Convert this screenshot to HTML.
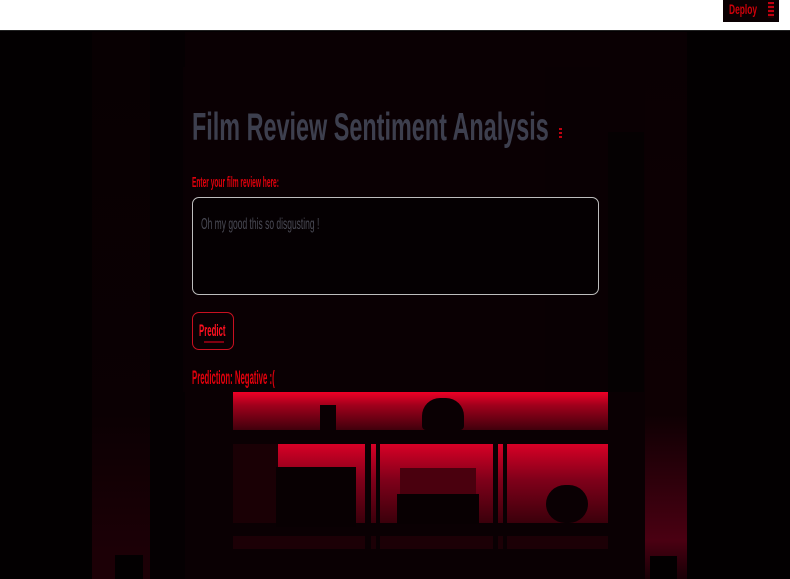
<!DOCTYPE html>
<html><head><meta charset="utf-8"><style>
*{margin:0;padding:0;box-sizing:border-box}
body{width:790px;height:579px;overflow:hidden;background:#030002;font-family:"Liberation Sans",sans-serif;position:relative}
.a{position:absolute}
.t{position:absolute;white-space:nowrap;transform-origin:0 0}
</style></head><body>
<div class="a" style="left:0;top:0;width:790px;height:31px;background:#fff;border-bottom:1px solid #222"></div>
<div class="a" style="left:723px;top:0;width:56px;height:22px;background:#0a0002"></div>
<div class="t" style="left:729px;top:1px;color:#d0000a;font-size:14px;font-weight:bold;transform:scaleX(.6)">Deploy</div>
<div class="a" style="left:768px;top:2px;width:6px;height:16px;background:repeating-linear-gradient(#c00010 0 2px,#200 2px 4px)"></div>

<div class="a" style="left:0;top:32px;width:790px;height:547px;background:#030001"></div>
<div class="a" style="left:92px;top:32px;width:58px;height:547px;background:linear-gradient(#080002 0%,#0b0003 70%,#1c0006 95%)"></div>
<div class="a" style="left:150px;top:32px;width:35px;height:547px;background:#050002"></div>
<div class="a" style="left:185px;top:32px;width:460px;height:547px;background:#0a0003"></div>
<div class="a" style="left:645px;top:32px;width:42px;height:547px;background:linear-gradient(#0a0003 0%,#0e0003 70%,#4a0012 93%,#180006)"></div>
<div class="a" style="left:688px;top:32px;width:102px;height:547px;background:#030001"></div>
<div class="a" style="left:545px;top:67px;width:55px;height:325px;background:#040001"></div>
<div class="a" style="left:608px;top:132px;width:36px;height:260px;background:#050102"></div>
<div class="a" style="left:115px;top:555px;width:28px;height:24px;background:#030001"></div>
<div class="a" style="left:650px;top:556px;width:27px;height:23px;background:#030001"></div>

<div class="a" style="left:233px;top:392px;width:375px;height:38px;background:linear-gradient(#f00026 0%,#a0001c 35%,#40000c 100%)"></div>
<div class="a" style="left:233px;top:430px;width:375px;height:14px;background:#0a0003"></div>
<div class="a" style="left:233px;top:444px;width:375px;height:79px;background:linear-gradient(#d80026 0%,#80001a 45%,#3a000b 100%)"></div>
<div class="a" style="left:233px;top:444px;width:45px;height:79px;background:#1a0005"></div>
<div class="a" style="left:233px;top:523px;width:375px;height:13px;background:#0a0003"></div>
<div class="a" style="left:233px;top:536px;width:375px;height:13px;background:#1c0006"></div>
<div class="a" style="left:365px;top:444px;width:6px;height:105px;background:#0a0003"></div>
<div class="a" style="left:376px;top:444px;width:4px;height:105px;background:#0a0003"></div>
<div class="a" style="left:493px;top:444px;width:5px;height:105px;background:#0a0003"></div>
<div class="a" style="left:503px;top:444px;width:4px;height:105px;background:#0a0003"></div>
<div class="a" style="left:276px;top:467px;width:80px;height:60px;background:#080002"></div>
<div class="a" style="left:397px;top:494px;width:82px;height:30px;background:#080002"></div>
<div class="a" style="left:400px;top:468px;width:76px;height:26px;background:#4a000e"></div>
<div class="a" style="left:546px;top:485px;width:42px;height:38px;border-radius:20px;background:#0a0003"></div>
<div class="a" style="left:422px;top:398px;width:42px;height:32px;border-radius:18px 18px 4px 4px;background:#0a0003"></div>
<div class="a" style="left:320px;top:405px;width:16px;height:25px;background:#0a0003"></div>

<div class="a" style="left:183px;top:67px;width:417px;height:325px;background:rgba(10,0,3,.85)"></div>
<div class="t" style="left:192px;top:106px;font-size:39px;font-weight:bold;color:#3d3f4e;transform:scaleX(.6)">Film Review Sentiment Analysis</div>
<div class="a" style="left:559px;top:128px;width:3px;height:10px;background:repeating-linear-gradient(#c00010 0 2px,transparent 2px 4px)"></div>
<div class="t" style="left:192px;top:174px;font-size:15px;font-weight:bold;color:#e0000c;transform:scaleX(.44)">Enter your film review here:</div>
<div class="a" style="left:192px;top:197px;width:407px;height:98px;border:1.5px solid #bdbdbd;border-radius:7px;background:#050002"></div>
<div class="t" style="left:201px;top:216px;font-size:16px;color:#4a4a55;transform:scaleX(.53)">Oh my good this so disgusting !</div>
<div class="a" style="left:192px;top:312px;width:42px;height:38px;border:1.5px solid #c81020;border-radius:7px;background:#0a0003"></div>
<div class="t" style="left:199px;top:321px;font-size:17px;font-weight:bold;color:#ff1020;transform:scaleX(.46)">Predict</div>
<div class="a" style="left:204px;top:341px;width:20px;height:2px;background:#800010"></div>
<div class="t" style="left:192px;top:368px;font-size:19px;font-weight:bold;color:#e0000c;transform:scaleX(.41)">Prediction: Negative :(</div>
</body></html>
